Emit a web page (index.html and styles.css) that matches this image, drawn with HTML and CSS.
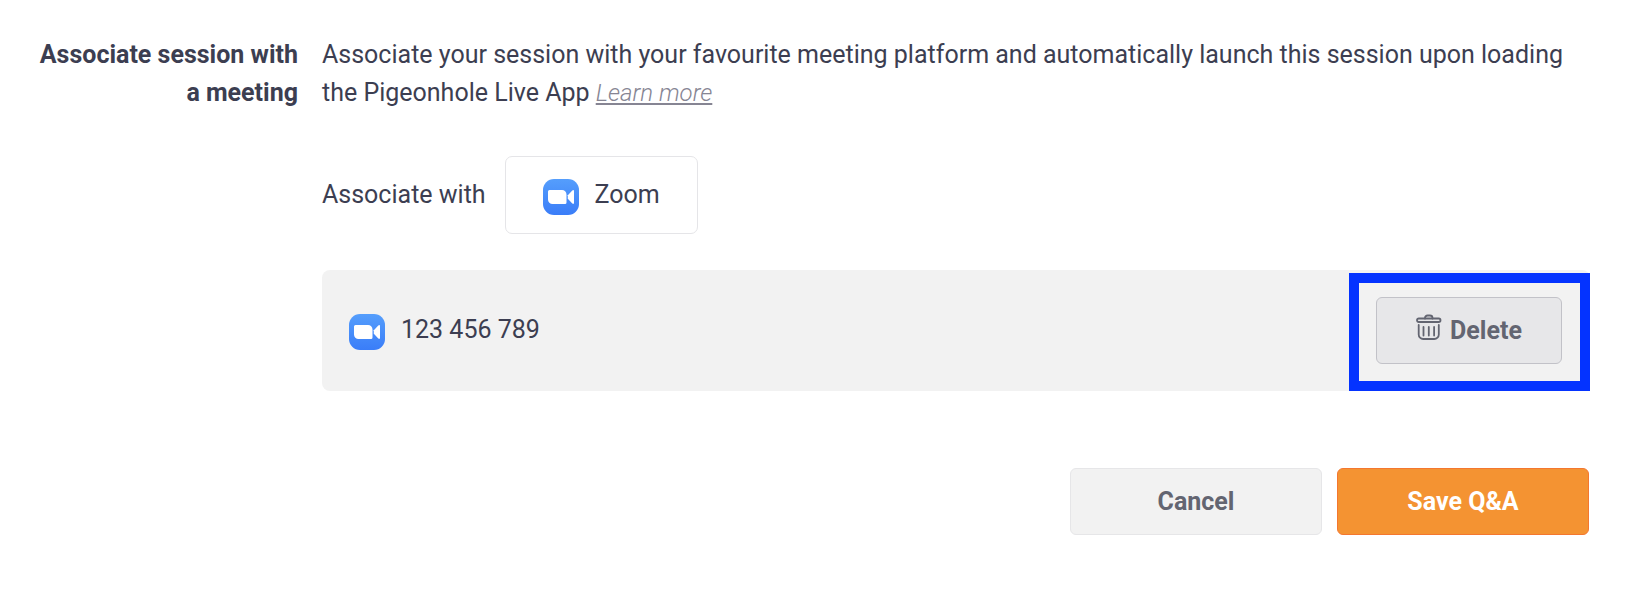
FILE: index.html
```html
<!DOCTYPE html>
<html lang="en">
<head>
  <meta charset="UTF-8">
  <meta name="viewport" content="width=device-width, initial-scale=1.0">
  <title>Associate session with a meeting</title>
  <link rel="stylesheet" href="styles.css">
</head>
<body>

<!-- Shared zoom logo -->
<svg class="defs" width="0" height="0" aria-hidden="true">
  <defs>
    <linearGradient id="zoomBlue" x1="0" y1="0" x2="0" y2="1">
      <stop offset="0" stop-color="#559efc"/>
      <stop offset="1" stop-color="#3a7df8"/>
    </linearGradient>
    <symbol id="zoom" viewBox="0 0 36 36">
      <rect width="36" height="36" rx="11" fill="url(#zoomBlue)"/>
      <path fill="#fff" d="M6.500 11H19a4.500 4.500 0 0 1 4.500 4.500V23.500a1.500 1.500 0 0 1-1.500 1.500H9.500a4.500 4.500 0 0 1-4.500-4.500V12.500A1.500 1.500 0 0 1 6.500 11z"/>
      <path fill="#fff" d="M24.800 16.200L29.300 11.500Q31 10.300 31 12.200V23.800Q31 25.700 29.300 24.500L24.800 19.800z"/>
    </symbol>
  </defs>
</svg>

<form class="session-form">
  <div class="row">
    <h2 class="row-label">Associate session with a meeting</h2>

    <div class="row-content">
      <p class="description">Associate your session with your favourite meeting platform and automatically launch this session upon loading the Pigeonhole Live App <a href="#learn-more">Learn more</a></p>

      <div class="platform">
        <span id="platform-label">Associate with</span>
        <button type="button" class="platform-button" aria-describedby="platform-label">
          <svg class="zoom-icon" aria-hidden="true"><use href="#zoom"/></svg>
          <span>Zoom</span>
        </button>
      </div>

      <div class="meeting">
        <div class="meeting-info">
          <svg class="zoom-icon" aria-hidden="true"><use href="#zoom"/></svg>
          <span>123 456 789</span>
        </div>
        <div class="highlight">
          <button type="button" class="button delete">
            <svg class="trash-icon" viewBox="0 0 26 26" aria-hidden="true">
              <rect x="1" y="4.500" width="23.500" height="3.500" rx="1.700"/>
              <path d="M9 4.500V4a2.500 2.500 0 0 1 2.500-2.500h2.500A2.500 2.500 0 0 1 16.500 4v.5"/>
              <path d="M2.700 11V20.500a4.500 4.500 0 0 0 4.500 4.500H18.300a4.500 4.500 0 0 0 4.500-4.500V11"/>
              <path d="M7.500 13v8.500M12.800 13v8.500M18.100 13v8.500"/>
            </svg>
            <span>Delete</span>
          </button>
        </div>
      </div>
    </div>
  </div>

  <div class="actions">
    <button type="button" class="button cancel">Cancel</button>
    <button type="submit" class="button save">Save Q&amp;A</button>
  </div>
</form>

</body>
</html>
```
FILE: styles.css
```css
* {
  margin: 0;
  padding: 0;
  box-sizing: border-box;
}

body {
  background-color: #fff;
  color: #3c3e51;
  font-family: Roboto, "Liberation Sans", sans-serif;
  font-size: 25px;
  line-height: 38px;
}

button {
  font: inherit;
  color: inherit;
  cursor: pointer;
}

.defs {
  position: absolute;
}

.session-form {
  padding: 36px 44px 60px 24px;
}

/* Label on the left, content on the right */
.row {
  display: grid;
  grid-template-columns: 274px 1fr;
  column-gap: 24px;
}

.row-label {
  font-size: 25px;
  font-weight: 700;
  text-align: right;
}

.description a {
  color: #868593;
  font-size: 24px;
  font-style: italic;
  font-weight: 300;
  text-decoration-thickness: 2px;
  text-underline-offset: 2px;
}

/* Platform picker */
.platform {
  display: flex;
  align-items: center;
  gap: 19px;
  margin-top: 44px;
}

.platform-button {
  display: flex;
  align-items: center;
  gap: 16px;
  height: 78px;
  padding: 0 37px;
  border: 1px solid #e5e5e8;
  border-radius: 7px;
  background-color: #fff;
}

.zoom-icon {
  width: 36px;
  height: 36px;
  margin-top: 4px;
}

/* Linked meeting */
.meeting {
  display: flex;
  justify-content: space-between;
  margin-top: 36px;
  padding-top: 3px;
  border-radius: 8px;
  background-color: #f2f2f2;
}

.meeting-info {
  display: flex;
  align-items: center;
  gap: 16px;
  padding: 0 0 4px 27px;
}

.highlight {
  padding: 14px 18px 17px 17px;
  border: 10px solid #0433ff;
}

/* Buttons */
.button {
  height: 67px;
  border: 1px solid #e6e6e8;
  border-radius: 6px;
  background-color: #f2f2f2;
  color: #636571;
  font-weight: 700;
}

.delete {
  display: flex;
  align-items: center;
  justify-content: center;
  gap: 8px;
  width: 186px;
  border-color: #c2c2c8;
  background-color: #e7e7e9;
}

.trash-icon {
  width: 26px;
  height: 26px;
  margin-bottom: 8px;
  fill: none;
  stroke: #636571;
  stroke-width: 1.8;
  stroke-linecap: round;
}

.actions {
  display: flex;
  justify-content: flex-end;
  gap: 15px;
  margin-top: 77px;
  padding-right: 1px;
}

.cancel,
.save {
  width: 252px;
}

.save {
  border-color: #f4772f;
  background-color: #f49332;
  color: #fff;
}
```
